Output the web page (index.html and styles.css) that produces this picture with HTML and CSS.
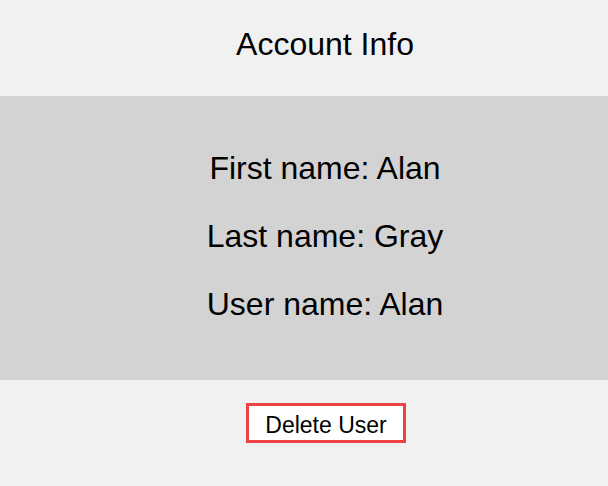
FILE: index.html
```html
<!DOCTYPE html>
<html>
<head>
<meta charset="utf-8">
<link rel="stylesheet" href="styles.css">
</head>
<body>
<header class="header">
  <h1 class="title">Account Info</h1>
</header>
<section class="band">
  <p class="row">First name: Alan</p>
  <p class="row">Last name: Gray</p>
  <p class="row">User name: Alan</p>
</section>
<div class="actions">
  <button class="delete">Delete User</button>
</div>
</body>
</html>
```

FILE: styles.css
```css
html, body {
  margin: 0;
  padding: 0;
  background: #f1f1f1;
  font-family: "Liberation Sans", Arial, sans-serif;
  color: #000;
}
.header {
  padding: 26px 0 34px 42px;
  text-align: center;
}
.title {
  margin: 0;
  font-size: 32px;
  font-weight: normal;
  line-height: 36px;
}
.band {
  background: #d3d3d3;
  padding: 54px 0 58px 42px;
  display: flex;
  flex-direction: column;
  gap: 32px;
  align-items: center;
}
.row {
  margin: 0;
  font-size: 32px;
  line-height: 36px;
}
.actions {
  padding: 23px 0 0 44px;
  display: flex;
  justify-content: center;
}
.delete {
  width: 160px;
  height: 40px;
  box-sizing: border-box;
  border: 3px solid #ee4343;
  background: #fff;
  font-family: "Liberation Sans", Arial, sans-serif;
  font-size: 23px;
  line-height: 26px;
  color: #000;
  padding: 4px 0 0;
  margin: 0;
  border-radius: 0;
}
```
